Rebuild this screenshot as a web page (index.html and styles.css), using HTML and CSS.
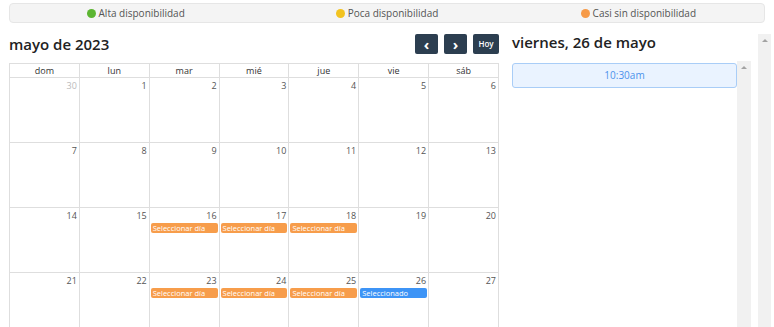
FILE: index.html
```html
<!DOCTYPE html>
<html lang="es">
<head>
    <meta charset="UTF-8">
    <meta name="viewport" content="width=device-width, initial-scale=1.0">
    <title>Reservar cita</title>
    <link rel="stylesheet" href="styles.css">
</head>
<body>
    <div class="page">
        <div class="legend">
            <div class="legend-item"><span class="dot dot-green"></span>Alta disponibilidad</div>
            <div class="legend-item"><span class="dot dot-yellow"></span>Poca disponibilidad</div>
            <div class="legend-item"><span class="dot dot-orange"></span>Casi sin disponibilidad</div>
        </div>

        <div class="content">
            <!-- calendario -->
            <div class="calendar">
                <div class="toolbar">
                    <h2>mayo de 2023</h2>
                    <div class="nav">
                        <button class="nav-btn">&lsaquo;</button>
                        <button class="nav-btn">&rsaquo;</button>
                        <button class="nav-btn today">Hoy</button>
                    </div>
                </div>
                <table class="month">
                    <thead>
                        <tr><th>dom</th><th>lun</th><th>mar</th><th>mié</th><th>jue</th><th>vie</th><th>sáb</th></tr>
                    </thead>
                    <tbody>
                        <tr>
                            <td><div class="num other">30</div></td>
                            <td><div class="num">1</div></td>
                            <td><div class="num">2</div></td>
                            <td><div class="num">3</div></td>
                            <td><div class="num">4</div></td>
                            <td><div class="num">5</div></td>
                            <td><div class="num">6</div></td>
                        </tr>
                        <tr>
                            <td><div class="num">7</div></td>
                            <td><div class="num">8</div></td>
                            <td><div class="num">9</div></td>
                            <td><div class="num">10</div></td>
                            <td><div class="num">11</div></td>
                            <td><div class="num">12</div></td>
                            <td><div class="num">13</div></td>
                        </tr>
                        <tr>
                            <td><div class="num">14</div></td>
                            <td><div class="num">15</div></td>
                            <td><div class="num">16</div><div class="event orange">Seleccionar día</div></td>
                            <td><div class="num">17</div><div class="event orange">Seleccionar día</div></td>
                            <td><div class="num">18</div><div class="event orange">Seleccionar día</div></td>
                            <td><div class="num">19</div></td>
                            <td><div class="num">20</div></td>
                        </tr>
                        <tr>
                            <td><div class="num">21</div></td>
                            <td><div class="num">22</div></td>
                            <td><div class="num">23</div><div class="event orange">Seleccionar día</div></td>
                            <td><div class="num">24</div><div class="event orange">Seleccionar día</div></td>
                            <td><div class="num">25</div><div class="event orange">Seleccionar día</div></td>
                            <td><div class="num">26</div><div class="event blue">Seleccionado</div></td>
                            <td><div class="num">27</div></td>
                        </tr>
                    </tbody>
                </table>
            </div>

            <!-- horarios del día -->
            <div class="day-panel">
                <div class="day-main">
                    <h2>viernes, 26 de mayo</h2>
                    <div class="slots-wrap">
                        <div class="slots">
                            <button class="slot">10:30am</button>
                        </div>
                        <div class="track inner"><span class="arrow"></span></div>
                    </div>
                </div>
                <div class="track outer"><span class="arrow"></span></div>
            </div>
        </div>
    </div>
</body>
</html>
```

FILE: styles.css
```css
body {
    font-family: 'Open Sans', 'Noto Sans', sans-serif;
    margin: 0;
    padding: 0;
    background-color: white;
    color: #333;
    overflow: hidden;
}
.page {
    padding: 3px 3px 0 9px;
}
.legend {
    display: grid;
    grid-template-columns: repeat(3, 1fr);
    width: 754px;
    height: 18px;
    background-color: #f4f4f4;
    border: 1px solid #e6e6e6;
    border-radius: 4px;
}
.legend-item {
    display: flex;
    align-items: center;
    justify-content: center;
    font-size: 10px;
    color: #555;
    gap: 3px;
}
.dot {
    width: 9px;
    height: 9px;
    border-radius: 50%;
    display: inline-block;
}
.dot-green { background-color: #5cb531; }
.dot-yellow { background-color: #f2c320; }
.dot-orange { background-color: #f69a48; }

.content {
    display: grid;
    grid-template-columns: 490px 1fr;
    gap: 13px;
    height: 304px;
}
h2 {
    margin: 0;
    font-size: 15px;
    font-weight: 600;
    color: #222;
}
.toolbar {
    display: flex;
    justify-content: space-between;
    align-items: center;
    height: 20px;
    margin-top: 11px;
    margin-bottom: 9px;
}
.nav {
    display: flex;
    gap: 6px;
}
.nav-btn {
    width: 23px;
    height: 20px;
    padding: 0;
    background-color: #2c3e50;
    color: white;
    border: none;
    border-radius: 2px;
    font-size: 15px;
    font-weight: bold;
    line-height: 18px;
    font-family: inherit;
    cursor: pointer;
}
.nav-btn.today {
    width: 26px;
    font-size: 8px;
    font-weight: 600;
}
.month {
    width: 490px;
    border-collapse: collapse;
    table-layout: fixed;
}
.month th {
    border: 1px solid #dedede;
    font-size: 9px;
    font-weight: 500;
    color: #333;
    height: 11px;
    padding: 0;
}
.month td {
    border: 1px solid #dedede;
    height: 64px;
    padding: 0;
    vertical-align: top;
}
.num {
    text-align: right;
    font-size: 9px;
    color: #555;
    padding: 1px 2px 0 0;
    height: 11px;
}
.num.other {
    color: #bbb;
}
.event {
    margin: 3px 1px 0 1px;
    height: 10px;
    line-height: 10px;
    border-radius: 2px;
    color: white;
    font-size: 7.5px;
    padding-left: 2px;
    white-space: nowrap;
    overflow: hidden;
}
.event.orange {
    background-color: #f79d4b;
}
.event.blue {
    background-color: #3d94f6;
}

.day-panel {
    display: flex;
    gap: 7px;
    padding-top: 11px;
}
.day-main {
    flex: 1;
    display: flex;
    flex-direction: column;
}
.day-main h2 {
    height: 16px;
    line-height: 16px;
    margin-bottom: 11px;
}
.slots-wrap {
    flex: 1;
    display: flex;
}
.slots {
    flex: 1;
    padding-top: 1px;
}
.slot {
    width: 100%;
    height: 25px;
    background-color: #eaf3ff;
    border: 1px solid #a9cdf7;
    border-radius: 3px;
    color: #4c92ec;
    font-family: inherit;
    font-size: 10px;
    cursor: pointer;
}
.track {
    background-color: #f1f1f1;
    position: relative;
}
.track.inner {
    width: 14px;
}
.track.outer {
    width: 13px;
}
.arrow {
    position: absolute;
    top: 5px;
    left: 50%;
    margin-left: -3px;
    border-left: 3px solid transparent;
    border-right: 3px solid transparent;
    border-bottom: 3px solid #a3a3a3;
}
```
